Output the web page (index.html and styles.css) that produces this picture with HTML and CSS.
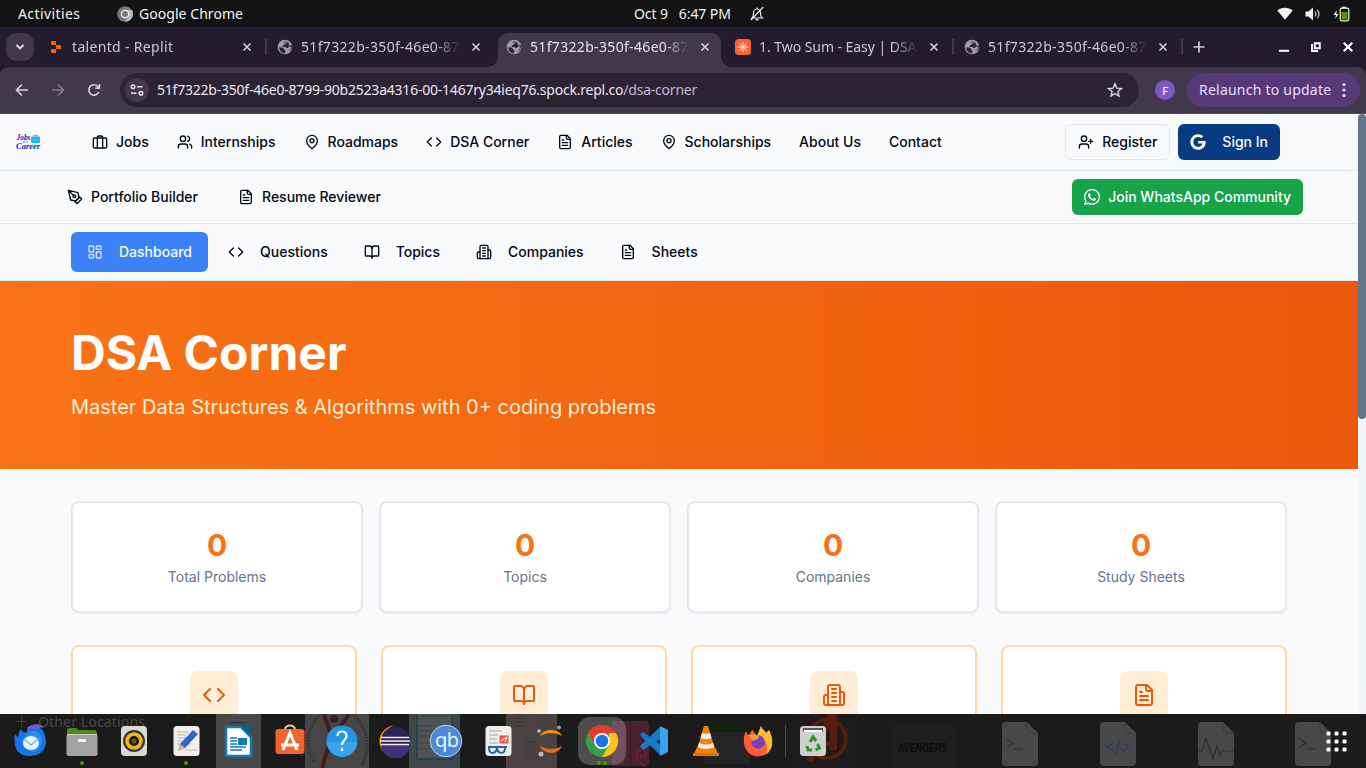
FILE: index.html
```html
<!DOCTYPE html>
<html lang="en">
<head>
<meta charset="utf-8">
<title>DSA Corner</title>
<link rel="stylesheet" href="styles.css">
</head>
<body>
<svg class="defs" aria-hidden="true">
  <symbol id="briefcase" viewBox="0 0 24 24"><rect x="2" y="6" width="20" height="15" rx="2"/><path d="M16 21V5a2 2 0 0 0-2-2h-4a2 2 0 0 0-2 2v16"/></symbol>
  <symbol id="users" viewBox="0 0 24 24"><path d="M16 21v-2a4 4 0 0 0-4-4H6a4 4 0 0 0-4 4v2"/><circle cx="9" cy="7" r="4"/><path d="M22 21v-2a4 4 0 0 0-3-3.87M16 3.13a4 4 0 0 1 0 7.75"/></symbol>
  <symbol id="pin" viewBox="0 0 24 24"><path d="M20 10c0 6-8 12-8 12s-8-6-8-12a8 8 0 0 1 16 0Z"/><circle cx="12" cy="10" r="3"/></symbol>
  <symbol id="code" viewBox="0 0 24 24"><path d="m16 18 6-6-6-6M8 6l-6 6 6 6"/></symbol>
  <symbol id="file" viewBox="0 0 24 24"><path d="M15 2H6a2 2 0 0 0-2 2v16a2 2 0 0 0 2 2h12a2 2 0 0 0 2-2V7Z"/><path d="M14 2v4a2 2 0 0 0 2 2h4M10 9H8M16 13H8M16 17H8"/></symbol>
  <symbol id="pen" viewBox="0 0 24 24"><path d="m12 19 7-7 3 3-7 7-3-3z"/><path d="m18 13-1.500-7.500L2 2l3.500 14.500L13 18l5-5zM2 2l7.586 7.586"/><circle cx="11" cy="11" r="2"/></symbol>
  <symbol id="dash" viewBox="0 0 24 24"><rect x="3" y="3" width="7" height="9" rx="1"/><rect x="14" y="3" width="7" height="5" rx="1"/><rect x="14" y="12" width="7" height="9" rx="1"/><rect x="3" y="16" width="7" height="5" rx="1"/></symbol>
  <symbol id="book" viewBox="0 0 24 24"><path d="M12 7v14"/><path d="M3 18a1 1 0 0 1-1-1V4a1 1 0 0 1 1-1h5a4 4 0 0 1 4 4 4 4 0 0 1 4-4h5a1 1 0 0 1 1 1v13a1 1 0 0 1-1 1h-6a3 3 0 0 0-3 3 3 3 0 0 0-3-3z"/></symbol>
  <symbol id="building" viewBox="0 0 24 24"><path d="M6 22V4a2 2 0 0 1 2-2h8a2 2 0 0 1 2 2v18Z"/><path d="M6 12H4a2 2 0 0 0-2 2v6a2 2 0 0 0 2 2h2M18 9h2a2 2 0 0 1 2 2v9a2 2 0 0 1-2 2h-2M10 6h4M10 10h4M10 14h4M10 18h4"/></symbol>
  <symbol id="userplus" viewBox="0 0 24 24"><path d="M16 21v-2a4 4 0 0 0-4-4H6a4 4 0 0 0-4 4v2"/><circle cx="9" cy="7" r="4"/><path d="M19 8v6M22 11h-6"/></symbol>
  <symbol id="close" viewBox="0 0 10 10"><path d="m1.500 1.500 7 7M8.500 1.500l-7 7"/></symbol>
  <symbol id="globe" viewBox="0 0 16 16"><circle cx="8" cy="8" r="7.300" fill="#9aa0a6"/><path d="M2.300 8.200c1.700 0 3.400.2 4.200 1 .7.700.3 1.600 1.300 1.900 1 .2.800 1 .4 1.900l-.5 1.300C4.500 14 2 11.500 2.300 8.200ZM6 3.400c1.400-.9 2.600-1 3.600-.8l-.2 1.600-1.800.6v1.300H6.100L5.600 8H8.500l1 .9h1.600l.5-1.500H14c.2 2.500-1.400 5-3.800 5.900 3.500-.7 5.300-4 4.600-7l-2 .2-1.300-1.500L12 3.600" fill="#2c2335"/></symbol>
</svg>

<header class="topbar">
  <span class="activities">Activities</span>
  <span class="app">
    <svg width="16" height="16" viewBox="0 0 16 16"><circle cx="8" cy="8" r="7.800" fill="#777"/><path d="M8 4h7a8 8 0 0 1-7 11.800L11.500 10Z" fill="#bbb"/><circle cx="8" cy="8" r="3.600" fill="#777" stroke="#f4f4f4" stroke-width="1.200"/></svg>
    <span class="app-name">Google Chrome</span>
  </span>
  <span class="clock"><span>Oct 9</span><span class="time">6:47 PM</span>
    <svg class="bell" width="14" height="16" viewBox="0 0 14 16"><path d="M2 12c1.500-1 1.500-2.500 1.500-5 0-2.500 1.500-4 3.500-4s3.500 1.500 3.500 4c0 2.500.2 4 1.800 5ZM7 1.500V3M13.300 1 1 14" fill="none" stroke="#eee" stroke-width="1.100"/><path d="M5 13h4l-2 2Z" fill="#eee"/></svg>
  </span>
  <span class="tray">
    <svg width="16" height="13" viewBox="0 0 16 13"><path d="M.3 3.600C4.500-.2 11.500-.2 15.700 3.600L8 12.800Z" fill="#f2f2f2"/></svg>
    <svg width="16" height="14" viewBox="0 0 16 14"><path d="M.5 4.500h3L8 .5v13l-4.500-4h-3Z" fill="#f2f2f2"/><path d="M10 4.500q2 2.500 0 5M12.300 2.800q3.400 4.200 0 8.400" fill="none" stroke="#d0d0d0" stroke-width="1.200"/></svg>
    <svg width="17" height="16" viewBox="0 0 17 16"><path d="M4 4 .5 9H3l-.8 4L5.500 8H3.200Z" fill="#f2f2f2"/><path d="M9 2.200V.7h4v1.500" fill="#eee"/><rect x="7.200" y="2.200" width="8.600" height="12.600" rx="1.500" fill="none" stroke="#eee" stroke-width="1.200"/><rect x="8.500" y="6" width="6" height="7.500" fill="#4e9a06"/></svg>
  </span>
</header>

<div class="tabstrip">
  <span class="tab-search"><svg width="10" height="8" viewBox="0 0 10 8"><path d="m1.500 2 3.500 3.500L8.500 2" fill="none" stroke="#e6dfee" stroke-width="1.800"/></svg></span>
  <div class="tab">
    <svg class="fav" width="16" height="16" viewBox="0 0 16 16" fill="#f26207"><rect x="3" y="2" width="5" height="4" rx=".6"/><rect x="8" y="6" width="5" height="4" rx=".6"/><rect x="3" y="10" width="5" height="4" rx=".6"/></svg>
    <span class="tab-title t-replit">talentd - Replit</span><svg class="x"><use href="#close"/></svg>
  </div><i class="sep"></i>
  <div class="tab"><svg class="fav" width="16" height="16"><use href="#globe"/></svg><span class="tab-title">51f7322b-350f-46e0-87</span><svg class="x"><use href="#close"/></svg></div><i class="sep off"></i>
  <div class="tab active"><svg class="fav" width="16" height="16"><use href="#globe"/></svg><span class="tab-title">51f7322b-350f-46e0-87</span><svg class="x"><use href="#close"/></svg></div><i class="sep off"></i>
  <div class="tab">
    <svg class="fav" width="16" height="16" viewBox="0 0 16 16"><rect width="16" height="16" rx="3.500" fill="#ff6230"/><path d="M8 2.800v10.400M2.800 8h10.400M4.300 4.300l7.400 7.400M11.700 4.300l-7.400 7.400" stroke="#ffe6dc" stroke-width="1"/></svg>
    <span class="tab-title t-sum">1. Two Sum - Easy | DSA</span><svg class="x"><use href="#close"/></svg></div><i class="sep"></i>
  <div class="tab"><svg class="fav" width="16" height="16"><use href="#globe"/></svg><span class="tab-title">51f7322b-350f-46e0-87</span><svg class="x"><use href="#close"/></svg></div><i class="sep"></i>
  <svg class="plus" width="12" height="12" viewBox="0 0 12 12"><path d="M6 .5v11M.5 6h11" stroke="#d3c8de" stroke-width="1.700"/></svg>
  <span class="winbtns">
    <svg width="12" height="12" viewBox="0 0 12 12"><path d="M1 9.800h10" stroke="#fff" stroke-width="2"/></svg>
    <svg width="12" height="12" viewBox="0 0 12 12"><path d="M4.800 2.200h5v5h-5zM2 3v7h6" fill="none" stroke="#fff" stroke-width="1.900"/></svg>
    <svg width="12" height="12" viewBox="0 0 12 12"><path d="m1.700 1.700 8.600 8.600M10.300 1.700l-8.600 8.600" stroke="#fff" stroke-width="2.100"/></svg>
  </span>
</div>

<div class="toolbar">
  <span class="navbtns">
    <svg width="14" height="14" viewBox="0 0 14 14"><path d="M13 7H2M7 1.500 1.500 7 7 12.500" /></svg>
    <svg class="dim" width="14" height="14" viewBox="0 0 14 14"><path d="M1 7h11M7 1.500 12.500 7 7 12.500"/></svg>
    <svg width="14" height="14" viewBox="0 0 14 14"><path d="M11.800 9a5.200 5.200 0 1 1-.9-5.500l1.300 1.300M12.400 1v4.200H8.200"/></svg>
  </span>
  <div class="omnibox">
    <span class="site"><svg width="14" height="12" viewBox="0 0 14 12"><circle cx="3" cy="2.700" r="1.800"/><path d="M7 2.700h5.500M1 9.300h5.500"/><circle cx="11" cy="9.300" r="1.800"/></svg></span>
    <span class="url">51f7322b-350f-46e0-8799-90b2523a4316-00-1467ry34ieq76.spock.repl.co<span class="path">/dsa-corner</span></span>
    <svg class="star" width="16" height="16" viewBox="0 0 16 16"><path d="m8 1.800 1.800 4.300 4.700.4-3.600 3 1.100 4.600L8 11.600l-4 2.500 1.100-4.600-3.600-3 4.700-.4Z" fill="none" stroke="#ddd3e6" stroke-width="1.400"/></svg>
  </div>
  <span class="avatar">F</span>
  <span class="relaunch"><span class="relaunch-text">Relaunch to update</span><svg width="4" height="16" viewBox="0 0 4 16" fill="#eadcff"><circle cx="2" cy="2.500" r="1.600"/><circle cx="2" cy="8" r="1.600"/><circle cx="2" cy="13.500" r="1.600"/></svg></span>
</div>

<main class="viewport">
  <div class="page">
    <nav class="nav-main">
      <svg class="logo" width="26" height="20" viewBox="0 0 26 20"><rect x="16" y="4.500" width="9" height="6.500" rx="1.200" fill="#22b4fa"/><path d="M18.500 4.500V3.500h4v1M16 8h9" fill="none" stroke="#28c8ff"/><text x="1.500" y="7.500" class="logo-a" textLength="14" lengthAdjust="spacingAndGlyphs">Jobs</text><text x="8" y="10.500" class="logo-b">for</text><text x="1" y="17" class="logo-a" textLength="24" lengthAdjust="spacingAndGlyphs">Career</text></svg>
      <div class="links">
        <a><svg class="ic"><use href="#briefcase"/></svg>Jobs</a>
        <a><svg class="ic"><use href="#users"/></svg>Internships</a>
        <a><svg class="ic"><use href="#pin"/></svg>Roadmaps</a>
        <a><svg class="ic"><use href="#code"/></svg>DSA Corner</a>
        <a><svg class="ic"><use href="#file"/></svg>Articles</a>
        <a><svg class="ic"><use href="#pin"/></svg>Scholarships</a>
        <a>About Us</a>
        <a>Contact</a>
      </div>
      <div class="auth">
        <a class="btn outline"><svg class="ic"><use href="#userplus"/></svg>Register</a>
        <a class="btn signin"><svg width="16" height="16" viewBox="0 0 488 512"><path fill="currentColor" d="M488 261.800C488 403.300 391.100 504 248 504 110.800 504 0 393.200 0 256S110.800 8 248 8c66.800 0 123 24.500 166.300 64.900l-67.500 64.900C258.500 52.600 94.300 116.600 94.300 256c0 86.500 69.100 156.600 153.700 156.600 98.200 0 135-70.400 140.800-106.900H248v-85.300h236.100c2.300 12.700 3.900 24.900 3.900 41.400z"/></svg>Sign In</a>
      </div>
    </nav>
    <nav class="nav-tools">
      <a><svg class="ic"><use href="#pen"/></svg>Portfolio Builder</a>
      <a><svg class="ic"><use href="#file"/></svg>Resume Reviewer</a>
      <a class="btn whatsapp"><svg width="16" height="16" viewBox="0 32 448 448"><path fill="currentColor" d="M380.900 97.100C339 55.100 283.200 32 223.900 32c-122.400 0-222 99.600-222 222 0 39.100 10.200 77.300 29.600 111L0 480l117.700-30.900c32.400 17.700 68.900 27 106.100 27h.1c122.300 0 224.100-99.600 224.100-222 0-59.300-25.200-115-67.100-157zm-157 341.600c-33.200 0-65.700-8.900-94-25.700l-6.700-4-69.800 18.300L72 359.200l-4.400-7c-18.500-29.400-28.200-63.300-28.200-98.200 0-101.700 82.800-184.500 184.600-184.500 49.300 0 95.600 19.200 130.400 54.100 34.800 34.900 56.200 81.200 56.100 130.500 0 101.800-84.900 184.600-186.600 184.600zm101.200-138.200c-5.500-2.800-32.800-16.200-37.900-18-5.100-1.900-8.800-2.800-12.500 2.800-3.700 5.600-14.300 18-17.600 21.800-3.200 3.700-6.500 4.200-12 1.400-32.600-16.300-54-29.100-75.500-66-5.700-9.800 5.700-9.100 16.300-30.300 1.800-3.700.9-6.900-.5-9.700-1.400-2.800-12.500-30.100-17.100-41.200-4.500-10.800-9.100-9.300-12.500-9.500-3.200-.2-6.900-.2-10.600-.2-3.700 0-9.700 1.400-14.800 6.900-5.100 5.600-19.400 19-19.400 46.300 0 27.300 19.900 53.700 22.600 57.400 2.800 3.700 39.100 59.700 94.800 83.800 35.200 15.200 49 16.500 66.600 13.900 10.700-1.600 32.800-13.400 37.400-26.400 4.600-13 4.600-24.100 3.200-26.400-1.300-2.500-5-3.900-10.500-6.600z"/></svg>Join WhatsApp Community</a>
    </nav>
    <nav class="nav-dsa">
      <a class="pill on"><svg class="ic"><use href="#dash"/></svg>Dashboard</a>
      <a class="pill"><svg class="ic"><use href="#code"/></svg>Questions</a>
      <a class="pill"><svg class="ic"><use href="#book"/></svg>Topics</a>
      <a class="pill"><svg class="ic"><use href="#building"/></svg>Companies</a>
      <a class="pill"><svg class="ic"><use href="#file"/></svg>Sheets</a>
    </nav>
    <section class="hero">
      <h1>DSA Corner</h1>
      <p>Master Data Structures &amp; Algorithms with 0+ coding problems</p>
    </section>
    <section class="stats">
      <div class="stat"><b>0</b><span>Total Problems</span></div>
      <div class="stat"><b>0</b><span>Topics</span></div>
      <div class="stat"><b>0</b><span>Companies</span></div>
      <div class="stat"><b>0</b><span>Study Sheets</span></div>
    </section>
    <section class="features">
      <div class="feature"><span class="tile"><svg><use href="#code"/></svg></span></div>
      <div class="feature"><span class="tile"><svg><use href="#book"/></svg></span></div>
      <div class="feature"><span class="tile"><svg><use href="#building"/></svg></span></div>
      <div class="feature"><span class="tile"><svg><use href="#file"/></svg></span></div>
    </section>
  </div>
  <div class="scrollbar"><div class="thumb"></div></div>
</main>

<footer class="dock">
  <svg class="backdrop" width="1366" height="54" viewBox="0 714 1366 54">
    <path d="M16 721.500h11M21.500 716v11" stroke="#3d3d3d"/>
    <text x="38" y="727" class="loc" textLength="107">Other Locations</text>
    <rect x="216" y="714" width="45" height="54" fill="#484848"/><path d="M232 715.500h13M224 720h33" stroke="#5f4b45"/><path d="M231 722.500h14" stroke="#263044"/><path d="M249 743h5M249 747h3M249 751h5" stroke="#5a5a5a"/>
    <rect x="305" y="714" width="64" height="54" fill="#464646"/>
    <path d="M319 716c-13 13-14 30-5 47M353 714c13 12 19 33 9 51" fill="none" stroke="#333" stroke-width="3" stroke-dasharray="1.500 1.500"/>
    <path d="M324 714c3 12 7 16 7 24-1 12-9 20-8 30M349 714c-5 10-13 13-16 24" fill="none" stroke="#401c1e" stroke-width="4"/><circle cx="334" cy="719" r="4" fill="#401c1e"/>
    <rect x="409" y="714" width="51" height="54" fill="#3c484b"/><path d="M417 713h35v46h-35Z" fill="#505353" stroke="#254447" stroke-width="2"/><path d="M421 716h28" stroke="#34484b" stroke-width="2"/><path d="M419 726h12M419 731h18M419 736h10M419 743h15M419 749h10" stroke="#3b4445"/>
    <rect x="506" y="714" width="51" height="54" fill="#4b4343"/><g fill="#494141" stroke="#593b3b"><path d="M512 714v17h16v-17M536 714v17h18v-17"/><rect x="524" y="740" width="15" height="22"/></g><path d="M527 742h9M515 718h8M515 722h8M515 726h8" stroke="#333"/>
    <rect x="612" y="721" width="37" height="45" rx="4" fill="#4a2131"/><path d="M631 721v45" stroke="#351824"/><path d="M638 761c-5-8 2-15 7-10 3 5-4 9-5 4M639 763l7 3" fill="none" stroke="#741e3e" stroke-width="1.500"/>
    <path d="M704 727q0-4 4-4h15l3 3h20q4 0 4 4v8h-46Z" fill="#15220b"/><rect x="704" y="732" width="46" height="32" rx="3" fill="#252525"/>
    <rect x="793" y="714" width="64" height="54" fill="#1e1c1b"/><g fill="none" stroke="#551e10"><circle cx="827" cy="739" r="19" stroke-width="4"/><path d="M809 761 832 714" stroke-width="7"/><path d="M833.500 714v36" stroke-width="7"/><path d="M820 743.500h14" stroke-width="5"/></g><path d="m831 736 7 7-7 7Z" fill="#551e10"/>
    <rect x="891" y="726" width="64" height="42" rx="3" fill="#1e1e1e"/><text x="898" y="752" class="avengers" textLength="49" lengthAdjust="spacingAndGlyphs">AVENGERS</text>
    <g fill="#484848"><path id="doc" d="M1006 722h21l11 11v29q0 4-4 4h-28q-4 0-4-4v-36q0-4 4-4Z"/><use href="#doc" x="98"/><use href="#doc" x="196"/><use href="#doc" x="293"/></g>
    <g fill="none" stroke="#3a3a3a"><path id="fold" d="M1027 722v7q0 4 4 4h7"/><use href="#fold" x="98"/><use href="#fold" x="196"/><use href="#fold" x="293"/></g>
    <g fill="none" stroke="#2e2e2e" stroke-width="1.200"><path id="prompt" d="m1007 739 6 4-6 4M1014 749h8"/><use href="#prompt" x="293"/><path d="M1198 751h4l4-13 7 21 4-13 3 10 2-5h12"/></g>
    <path d="m1113 743-6 4 6 4M1123 743l6 4-6 4M1120 739l-4 16" fill="none" stroke="#2e3a68" stroke-width="1.500"/>
  </svg>
  <div class="apps">
    <span class="app-cell"><svg viewBox="0 0 34 34"><path d="M14 4c8-5 17 0 18 8 3 9-1 19-14 20C8 33 1 26 2 18c-1-3-1-6 1-8 0 2 1 3 2 3 1-5 2-7 3-8 1 3 3 4 6 3Z" fill="#1675e6"/><path d="M14 4c6-6 15-4 17 0-5-2-8 3-17 0Z" fill="#7658cf"/><path d="M15 9c5-4 12-2 14 5 1 8-4 13-9 14l-9-4-2-8Z" fill="#2a8df0"/><ellipse cx="18" cy="19" rx="8" ry="7" fill="#e9f6ff"/><path d="m11 15 7 6 7-6" fill="none" stroke="#68bef6" stroke-width="1.500"/></svg></span>
    <span class="app-cell run"><svg viewBox="0 0 34 34"><path d="M2 7q0-3 3-3h6l2 2h16q3 0 3 3v7H2Z" fill="#4b8a19"/><rect x="1.500" y="10" width="31" height="22" rx="2.500" fill="#a3a3a3"/><path d="M2 10.500h30" stroke="#ccc"/><rect x="13" y="15" width="8" height="3" rx="1" fill="#f6f6f6"/></svg></span>
    <span class="app-cell"><svg viewBox="0 0 34 34"><rect x="4" y="2" width="26" height="30" rx="4" fill="#ded8ce"/><circle cx="17" cy="17" r="11" fill="#343434"/><circle cx="17" cy="17" r="8.800" fill="#efb51b"/><circle cx="17" cy="17" r="3.800" fill="#6d5418" stroke="#181818" stroke-width="2.500"/></svg></span>
    <span class="app-cell run"><svg viewBox="0 0 34 34"><rect x="4.500" y="2" width="26" height="30" rx="3.500" fill="#f1f0ee"/><path d="M8 8h11M8 11h9M8 14h15M8 17h8M8 20h14M16 26h12" stroke="#bbb8b1"/><path d="m9 27 2-7L24 6l5 4-13 14Z" fill="#3264cd"/><path d="m9 27 2-7 5 4Z" fill="#eab28a"/></svg></span>
    <span class="app-cell"><svg viewBox="0 0 34 34"><path d="M5 3h15l10 10v19H5Z" fill="#fff" stroke="#1678b2" stroke-width="2.500"/><path d="M20 2h10v11Z" fill="#0d5e8a"/><path d="M9 14h7M9 17h7M9 20h7M9 23h16M9 26h12" stroke="#1379b9" stroke-width="1.600"/><rect x="17" y="14" width="9" height="7" fill="#1379b9"/></svg></span>
    <span class="app-cell"><svg viewBox="0 0 34 34"><path d="M12 6c0-6 10-6 10 0" fill="none" stroke="#e5c6a5" stroke-width="2"/><rect x="2.500" y="5" width="29" height="25" rx="3" fill="#f2642d"/><path d="m10 26 7-17 7 17M8 21h18" fill="none" stroke="#fff" stroke-width="3"/></svg></span>
    <span class="app-cell"><svg viewBox="0 0 34 34"><circle cx="17" cy="17" r="15.500" fill="#2295e3"/><path d="M2 18a15 15 0 0 0 30 0Z" fill="#38a4eb"/><path d="M12.500 12c0-6 9-6 9 0 0 4-4.500 4-4.500 9M17 24v3" fill="none" stroke="#fff" stroke-width="2.200"/></svg></span>
    <span class="app-cell"><svg viewBox="0 0 34 34"><path d="M17 1C-2 5-2 28 15 33 4 27 4 7 17 1Z" fill="#f7941e"/><circle cx="18.500" cy="17" r="14.500" fill="#2c2255"/><path d="M4 20h29a14.500 14.500 0 0 1-29 0" fill="#423078"/><path d="M4 13.500h28M3 17h30M4 20.500h28" stroke="#f1f1f6" stroke-width="1.500"/></svg></span>
    <span class="app-cell"><svg viewBox="0 0 34 34"><circle cx="17" cy="17" r="15.800" fill="#4a8ad8" stroke="#b5d3f5"/><text x="6" y="23" class="qb">qb</text></svg></span>
    <span class="app-cell"><svg viewBox="0 0 34 34"><rect x="4.500" y="2" width="26" height="30" rx="3.500" fill="#f0eeeb"/><path d="M8 7h13M8 11h9M8 15h8M8 19h9" stroke="#aea99d" stroke-width="1.200"/><rect x="18.500" y="11.500" width="9" height="8" fill="#f05345"/><path d="m20 17 6-4-2 5" stroke="#fff" fill="none"/><path d="M7 23h19M8 24c0 7 7 6 8 0 1 6 8 7 8 0" fill="none" stroke="#2b639f" stroke-width="2"/></svg></span>
    <span class="app-cell"><svg viewBox="0 0 34 34"><path d="M7 12C10 4 26 4 29 12 22 8 14 8 7 12Z" fill="#f09409"/><path d="M7 22C10 31 26 31 29 22 22 26 14 26 7 22Z" fill="#e96d11"/><circle cx="6" cy="7" r="1.700" fill="#ccc"/><circle cx="26" cy="3.500" r="2" fill="#999ca4"/><circle cx="8" cy="30" r="2.500" fill="#bbb"/></svg></span>
    <span class="app-cell focus run2"><svg viewBox="0 0 34 34"><circle cx="17" cy="17" r="16" fill="#34a04f"/><path d="M3.100 9A16 16 0 0 1 30.900 9H17l-7 12Z" fill="#e33b2e"/><path d="M30.900 9A16 16 0 0 1 17 33l7-12V9Z" fill="#fbc116"/><circle cx="17" cy="17" r="8" fill="#fff"/><circle cx="17" cy="17" r="6.300" fill="#1a73e8"/></svg></span>
    <span class="app-cell"><svg viewBox="0 0 34 34"><path d="m3 22 20-19 4 2v8L6 26ZM3 11l3-3 21 15v6l-4 2Z" fill="#167bc4"/><path d="m23 2 8 4v22l-8 4Z" fill="#36a5ee"/></svg></span>
    <span class="app-cell"><svg viewBox="0 0 34 34"><path d="m8 23-4 9h26l-4-9Z" fill="#f48209"/><path d="M15 2h4l7 23q-9 5-18 0Z" fill="#f48209"/><path d="m13 9-1.500 5q5.500 2.500 11 0L21 9q-4 1.500-8 0ZM10 19l-1.300 4q8 4 16.600 0L24 19q-7 3-14 0Z" fill="#eee"/><path d="M4 29h26v3H4Z" fill="#e56e05"/></svg></span>
    <span class="app-cell"><svg viewBox="0 0 34 34"><path d="M20 2c1 4 3 3 5 7l3-3c6 12 4 24-8 26C6 35-1 20 5 7c1 3 2 4 4 4 0-3 1-4 3-5 1 4 4 4 4 6Z" fill="#ff6032"/><path d="M20 2c1 4 3 3 5 7l3-3c5 10 4 19-3 24 3-12-1-15-9-18Z" fill="#ffbd2e"/><path d="M4 20c2 11 11 13 19 10-7 5-17 3-19-10Z" fill="#f52b75"/><circle cx="17" cy="18" r="6.800" fill="#7542c7"/><path d="M8 11c4-1 7 0 10 1 0 3-4 4-6 5Z" fill="#ff9c2a"/></svg></span>
    <i class="dock-sep"></i>
    <span class="app-cell trash"><svg viewBox="0 0 34 34"><rect x="4" y="2" width="26" height="30" rx="3.500" fill="#cfcfcf"/><path d="M7 4h20v4H7Z" fill="#555"/><path d="M8 6h18v2H8Z" fill="#fff"/><g fill="none" stroke="#2d932d" stroke-width="3"><path d="m14 18 3-5 3 4M21.500 20l2 4-4 2M16 26h-4l-1-4"/></g></svg></span>
    <svg class="grid" width="21" height="21" viewBox="0 0 21 21" fill="#fff"><rect x=".5" y=".5" width="4" height="4" rx="1.200"/><rect x="8.500" y=".5" width="4" height="4" rx="1.200"/><rect x="16.500" y=".5" width="4" height="4" rx="1.200"/><rect x=".5" y="8.500" width="4" height="4" rx="1.200"/><rect x="8.500" y="8.500" width="4" height="4" rx="1.200"/><rect x="16.500" y="8.500" width="4" height="4" rx="1.200"/><rect x=".5" y="16.500" width="4" height="4" rx="1.200"/><rect x="8.500" y="16.500" width="4" height="4" rx="1.200"/><rect x="16.500" y="16.500" width="4" height="4" rx="1.200"/></svg>
  </div>
</footer>
</body>
</html>
```
FILE: styles.css
```css
* { box-sizing: border-box; }
body { margin: 0; width: 1366px; height: 768px; overflow: hidden; display: flex; flex-direction: column; background: #1b1b1b; font-family: "Noto Sans", sans-serif; }
svg { display: block; flex: none; }
.defs { position: absolute; width: 0; height: 0; }

/* desktop top bar */
.topbar { height: 27px; flex: none; display: flex; align-items: center; background: #131313; color: #f2f2f2; font-size: 14px; line-height: 18px; white-space: nowrap; }
.activities { margin-left: 18px; width: 99px; letter-spacing: .4px; }
.app { display: flex; align-items: center; gap: 6px; width: 517px; }
.app-name { letter-spacing: .05px; }
.clock { display: flex; align-items: center; letter-spacing: -.1px; }
.time { margin-left: 11px; }
.bell { margin-left: 19px; }
.tray { margin-left: auto; margin-right: 16px; display: flex; align-items: center; gap: 12px; }

/* browser tabs */
.tabstrip { height: 40px; flex: none; display: flex; align-items: center; background: #241b2e; color: #d0c5d9; }
.tab-search { width: 28px; height: 28px; margin: 0 6px; border-radius: 10px; background: #42384b; display: flex; align-items: center; justify-content: center; }
.tab { width: 223px; height: 34px; margin-top: 6px; padding: 0 11px 6px 8px; display: flex; align-items: center; }
.tab.active { background: #42384b; border-radius: 10px 10px 0 0; color: #e9e1f0; position: relative; }
.tab.active::before, .tab.active::after { content: ""; position: absolute; bottom: 0; width: 10px; height: 10px; }
.tab.active::before { left: -10px; background: radial-gradient(circle at 0 0, transparent 9.5px, #42384b 10px); }
.tab.active::after { right: -10px; background: radial-gradient(circle at 100% 0, transparent 9.5px, #42384b 10px); }
.tab-title { margin-left: 8px; width: 159px; font-size: 14px; line-height: 18px; margin-top: -1px; white-space: nowrap; letter-spacing: .33px; -webkit-mask-image: linear-gradient(90deg, #000 133px, transparent); mask-image: linear-gradient(90deg, #000 133px, transparent); }
.t-sum { letter-spacing: -.05px; }
.x { width: 10px; height: 10px; margin-left: auto; stroke: #dcd4e3; stroke-width: 1.5; }
.sep { width: 2px; height: 16px; margin: 0 2px; background: #42384b; }
.sep.off { background: transparent; }
.plus { margin-left: 8px; }
.winbtns { display: flex; gap: 20px; margin-left: auto; margin-right: 12px; }

/* browser toolbar */
.toolbar { height: 47px; flex: none; display: flex; align-items: center; background: #42384b; border-bottom: 1px solid #544a5d; border-radius: 8px 8px 0 0; }
.navbtns { display: flex; gap: 22px; margin-left: 15px; fill: none; stroke: #d6cbdf; stroke-width: 1.7; }
.dim { opacity: .45; }
.omnibox { width: 1019px; height: 34px; margin-left: 19px; padding: 0 16px 0 5px; border-radius: 17px; background: #2c2335; display: flex; align-items: center; }
.site { width: 24px; height: 24px; border-radius: 50%; background: #42384b; display: flex; align-items: center; justify-content: center; fill: none; stroke: #e5ddec; stroke-width: 1.5; }
.url { margin-left: 8px; padding-bottom: 1px; font-size: 14px; line-height: 18px; color: #ece5f2; white-space: nowrap; letter-spacing: -.22px; }
.path { color: #c2b6cc; }
.star { margin-left: auto; }
.avatar { width: 20px; height: 20px; margin-left: 16px; border-radius: 50%; background: #7e57c2; color: #fff; font-size: 11px; display: flex; align-items: center; justify-content: center; }
.relaunch { width: 173px; height: 34px; margin-left: 12px; padding: 0 14px 0 12px; border-radius: 17px; background: #563a78; color: #eadcff; font-size: 14px; display: flex; align-items: center; justify-content: space-between; white-space: nowrap; }
.relaunch-text { letter-spacing: .23px; line-height: 18px; padding-bottom: 1px; }

/* page */
.viewport { height: 600px; flex: none; display: flex; overflow: hidden; background: #f8fafc; font-family: Inter, sans-serif; color: #020817; }
.page { width: 1358px; }
.scrollbar { width: 8px; background: #f1f5f9; }
.thumb { height: 305px; border-radius: 4px; background: #64748b; }
.ic { width: 16px; height: 16px; fill: none; stroke: currentColor; stroke-width: 2; stroke-linecap: round; stroke-linejoin: round; }
nav { display: flex; align-items: center; border-bottom: 1px solid #e2e8f0; font-size: 14px; line-height: 20px; font-weight: 500; white-space: nowrap; }
nav a { display: flex; align-items: center; gap: 8px; }
.nav-main { height: 57px; padding: 0 78px 0 15px; }
.logo-a { font: italic bold 8.5px "Liberation Serif", serif; fill: #1616b4; }
.logo-b { font: italic bold 4px "Liberation Serif", serif; fill: #22b4fa; }
.links { display: flex; gap: 28px; margin-left: 51px; }
.auth { display: flex; gap: 8px; margin-left: auto; }
.btn { height: 36px; padding: 0 12px; border-radius: 6px; }
.outline { border: 1px solid #e2e8f0; }
.signin { gap: 16px; background: #083b82; color: #f8fafc; }
.nav-tools { height: 53px; padding: 0 55px 0 67px; gap: 40px; }
.whatsapp { margin-left: auto; background: #16a34a; color: #fff; }
.nav-dsa { height: 57px; padding-left: 71px; gap: 4px; }
.pill { height: 40px; padding: 0 16px; gap: 16px; border-radius: 6px; }
.pill.on { background: #3b82f6; color: #f8fafc; }
.pill.on .ic { opacity: .8; }
.hero { height: 188px; padding: 48px 71px; background: linear-gradient(90deg, #f97316, #ea580c); color: #fff; }
.hero h1 { margin: 0 0 16px; font-size: 48px; line-height: 48px; font-weight: 700; }
.hero p { margin: 0; font-size: 20px; line-height: 28px; color: #ffedd5; }
.stats { display: grid; grid-template-columns: repeat(4, 1fr); gap: 16px; padding: 32px 71px; }
.stat { height: 112px; padding: 24px; border: 2px solid #e2e8f0; border-radius: 8px; background: #fff; box-shadow: 0 1px 2px rgba(0,0,0,.05); display: flex; flex-direction: column; align-items: center; gap: 4px; }
.stat b { font-size: 30px; line-height: 36px; color: #f97316; }
.stat span { font-size: 14px; line-height: 20px; color: #64748b; }
.features { display: grid; grid-template-columns: repeat(4, 1fr); gap: 24px; padding: 0 71px; }
.feature { height: 200px; padding-top: 24px; border: 2px solid #fed7aa; border-radius: 8px; background: #fff; display: flex; justify-content: center; }
.tile { width: 48px; height: 48px; border-radius: 8px; background: #ffedd5; display: flex; align-items: center; justify-content: center; }
.tile svg { width: 24px; height: 24px; fill: none; stroke: #ea580c; stroke-width: 2; stroke-linecap: round; stroke-linejoin: round; }

/* dock */
.dock { height: 54px; flex: none; position: relative; background: #1b1b1b; }
.backdrop { position: absolute; inset: 0; }
.loc { font-size: 14px; fill: #484848; }
.avengers { font: italic bold 13px "Liberation Sans", sans-serif; fill: #0b0b0b; }
.apps { position: relative; height: 54px; padding-left: 4px; display: flex; align-items: center; }
.app-cell { width: 52px; height: 54px; display: flex; align-items: center; justify-content: center; position: relative; }
.app-cell svg { width: 34px; height: 34px; position: relative; }
.app-cell.focus::before { content: ""; position: absolute; left: 2px; top: 3px; width: 48px; height: 48px; border-radius: 12px; background: rgba(255,255,255,.22); }
.run::after, .run2::after { content: ""; position: absolute; left: 24px; top: 47px; width: 4px; height: 4px; border-radius: 50%; background: #4e9a06; }
.run2::after { left: 21px; box-shadow: 6px 0 #4e9a06; }
.qb { font: 20px "Noto Sans", sans-serif; letter-spacing: -.5px; fill: #eaf4ff; }
.dock-sep { width: 1px; height: 32px; margin-left: 1px; background: #4b4b4b; }
.trash { margin-left: 1px; }
.grid { margin-left: auto; margin-right: 19px; }
```
